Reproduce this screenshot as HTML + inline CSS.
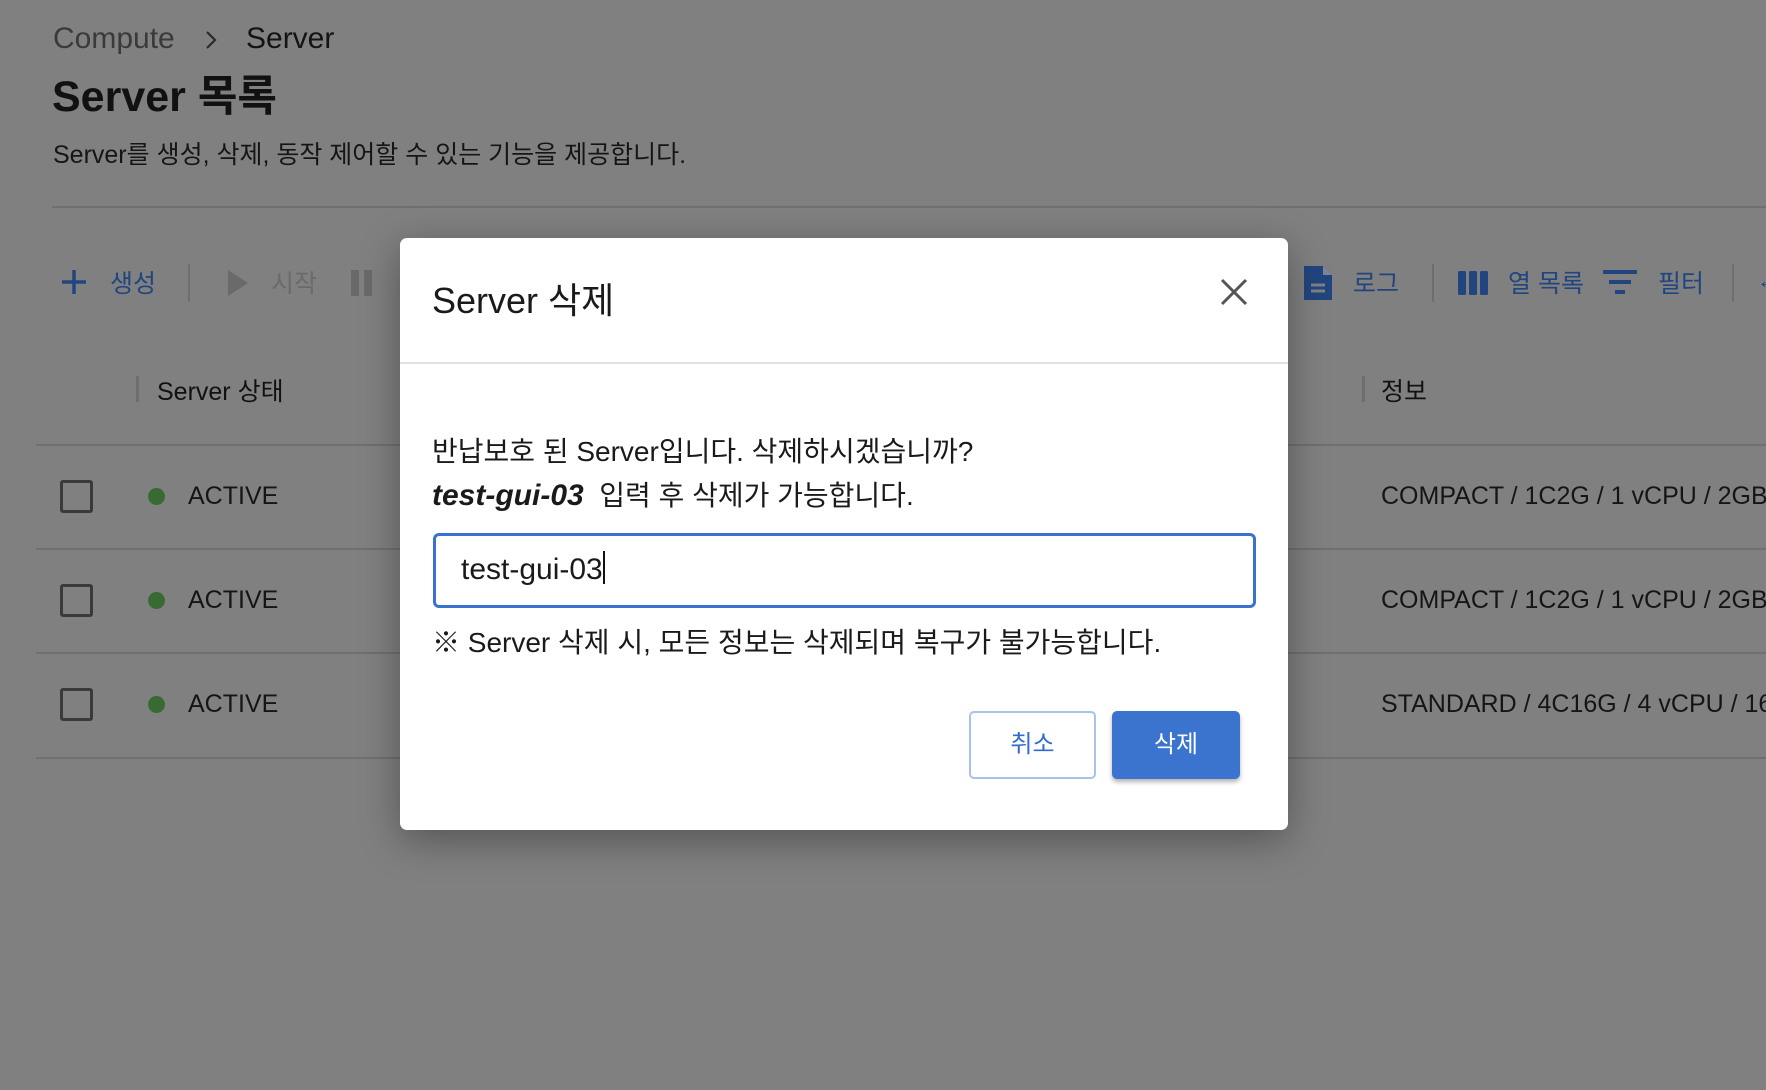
<!DOCTYPE html>
<html><head><meta charset="utf-8"><style>
*{box-sizing:border-box;margin:0;padding:0}
body{width:1766px;height:1090px;overflow:hidden;background:#808080;font-family:"Liberation Sans","Noto Sans CJK KR",sans-serif;color:#111;position:relative}
.a{position:absolute;white-space:nowrap}
.blue{color:#21457f}
.hl{position:absolute;height:2px;background:#707070}
.cb{position:absolute;left:60px;width:33px;height:33px;border:3px solid #3a3a3a;border-radius:3px}
.dot{position:absolute;left:148px;width:17px;height:17px;border-radius:50%;background:#386a34}
.modal{position:absolute;left:400px;top:238px;width:888px;height:592px;background:#fff;border-radius:7px;box-shadow:0 10px 40px rgba(0,0,0,.35)}
</style></head><body>
<div class="a" style="left:53px;top:22px;font-size:30px;color:#3a3a3a">Compute</div>
<svg class="a" style="left:205px;top:30px" width="12" height="20"><path d="M2 2L10 10L2 18" stroke="#2a2a2a" stroke-width="2.2" fill="none"/></svg>
<div class="a" style="left:246px;top:22px;font-size:30px;color:#141414">Server</div>
<div class="a" style="left:52px;top:62px;font-size:43px;font-weight:bold;color:#111">Server 목록</div>
<div class="a" style="left:53px;top:135px;font-size:25px;color:#151515">Server를 생성, 삭제, 동작 제어할 수 있는 기능을 제공합니다.</div>
<div class="hl" style="left:52px;top:206px;width:1714px"></div>

<svg class="a" style="left:60px;top:268px" width="28" height="28" viewBox="0 0 28 28"><path d="M14 2v24M2 14h24" stroke="#21457f" stroke-width="3.5"/></svg>
<div class="a blue" style="left:110px;top:264px;font-size:25px">생성</div>
<div class="a" style="left:188px;top:264px;width:2px;height:38px;background:#6e6e6e"></div>
<svg class="a" style="left:228px;top:270px" width="20" height="26"><path d="M0 0L20 13L0 26Z" fill="#6a6a6a"/></svg>
<div class="a" style="left:271px;top:264px;font-size:25px;color:#6a6a6a">시작</div>
<svg class="a" style="left:351px;top:270px" width="22" height="26"><rect x="0" width="8" height="26" fill="#6a6a6a"/><rect x="13" width="8" height="26" fill="#6a6a6a"/></svg>

<svg class="a" style="left:1304px;top:266px" width="28" height="34" viewBox="0 0 28 34"><path d="M0 0H19L28 9V34H0Z" fill="#21457f"/><path d="M19 0V9H28" fill="#7d8799"/><path d="M7 19H21M7 25H21" stroke="#808080" stroke-width="3"/></svg>
<div class="a blue" style="left:1353px;top:264px;font-size:25px">로그</div>
<div class="a" style="left:1432px;top:264px;width:2px;height:38px;background:#6e6e6e"></div>
<svg class="a" style="left:1458px;top:271px" width="30" height="24"><rect x="0" width="8" height="24" rx="1.5" fill="#21457f"/><rect x="11" width="8" height="24" rx="1.5" fill="#21457f"/><rect x="22" width="8" height="24" rx="1.5" fill="#21457f"/></svg>
<div class="a blue" style="left:1508px;top:264px;font-size:25px">열 목록</div>
<svg class="a" style="left:1603px;top:270px" width="36" height="26"><path d="M0 2H34M6 12H28M12 22H22" stroke="#21457f" stroke-width="4"/></svg>
<div class="a blue" style="left:1658px;top:264px;font-size:25px">필터</div>
<div class="a" style="left:1732px;top:264px;width:2px;height:38px;background:#6e6e6e"></div>
<div class="a blue" style="left:1757px;top:268px;font-size:22px">←</div>

<div class="a" style="left:136px;top:376px;width:3px;height:26px;background:#6e6e6e"></div>
<div class="a" style="left:157px;top:372px;font-size:25px;color:#111">Server 상태</div>
<div class="a" style="left:1362px;top:376px;width:3px;height:26px;background:#6e6e6e"></div>
<div class="a" style="left:1381px;top:372px;font-size:25px;color:#111">정보</div>

<div class="hl" style="left:36px;top:444px;width:1730px"></div>
<div class="hl" style="left:36px;top:548px;width:1730px"></div>
<div class="hl" style="left:36px;top:652px;width:1730px"></div>
<div class="hl" style="left:36px;top:757px;width:1730px"></div>

<div class="cb" style="top:480px"></div><div class="dot" style="top:488px"></div>
<div class="a" style="left:188px;top:482px;font-size:25px;color:#151515">ACTIVE</div>
<div class="cb" style="top:584px"></div><div class="dot" style="top:592px"></div>
<div class="a" style="left:188px;top:586px;font-size:25px;color:#151515">ACTIVE</div>
<div class="cb" style="top:688px"></div><div class="dot" style="top:696px"></div>
<div class="a" style="left:188px;top:690px;font-size:25px;color:#151515">ACTIVE</div>
<div class="a" style="left:1381px;top:482px;font-size:25px;color:#151515">COMPACT / 1C2G / 1 vCPU / 2GB</div>
<div class="a" style="left:1381px;top:586px;font-size:25px;color:#151515">COMPACT / 1C2G / 1 vCPU / 2GB</div>
<div class="a" style="left:1381px;top:690px;font-size:25px;color:#151515">STANDARD / 4C16G / 4 vCPU / 16GB</div>

<div class="modal">
  <div class="a" style="left:32px;top:34px;font-size:36px;color:#1a1a1a">Server 삭제</div>
  <svg class="a" style="left:820px;top:40px" width="28" height="28"><path d="M2 2L26 26M26 2L2 26" stroke="#555" stroke-width="3"/></svg>
  <div class="a" style="left:0;top:124px;width:888px;height:2px;background:#e2e2e2"></div>
  <div class="a" style="left:32px;top:192px;font-size:28px;color:#1a1a1a">반납보호 된 Server입니다. 삭제하시겠습니까?</div>
  <div class="a" style="left:32px;top:236px;font-size:28px;color:#1a1a1a"><b><i style="font-size:30px">test-gui-03</i></b>&nbsp; 입력 후 삭제가 가능합니다.</div>
  <div class="a" style="left:33px;top:295px;width:823px;height:75px;border:3px solid #3a73cf;border-radius:6px"></div>
  <div class="a" style="left:61px;top:313px;font-size:30px;color:#1a1a1a">test-gui-03<span style="display:inline-block;width:2px;height:33px;background:#111;vertical-align:-5px"></span></div>
  <div class="a" style="left:32px;top:383px;font-size:28px;color:#1a1a1a">※ Server 삭제 시, 모든 정보는 삭제되며 복구가 불가능합니다.</div>
  <div class="a" style="left:569px;top:473px;width:127px;height:68px;border:2px solid #a9c2ea;border-radius:5px;color:#2f6bd0;font-size:24px;text-align:center;line-height:64px">취소</div>
  <div class="a" style="left:712px;top:473px;width:128px;height:68px;background:#3a74cf;border-radius:5px;color:#fff;font-size:24px;text-align:center;line-height:68px;box-shadow:0 3px 5px rgba(0,0,0,.3)">삭제</div>
</div>
</body></html>
